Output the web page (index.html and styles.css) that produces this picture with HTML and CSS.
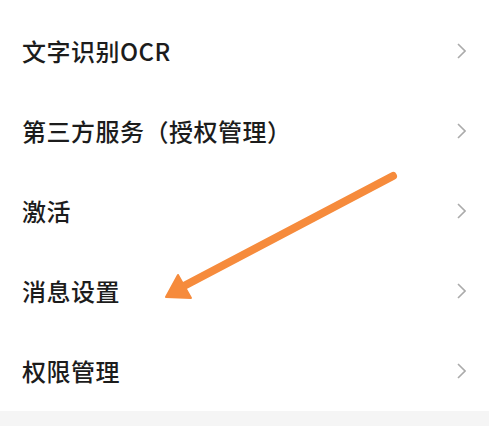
FILE: index.html
```html
<!DOCTYPE html>
<html lang="zh-CN">
<head>
<meta charset="utf-8">
<title>设置</title>
<link rel="stylesheet" href="styles.css">
</head>
<body>
<div class="page">
  <ul class="menu">
    <li class="row"><span class="label">文字识别OCR</span><svg class="chev" viewBox="0 0 9 16"><path d="M1 1 L8 8 L1 15"/></svg></li>
    <li class="row"><span class="label">第三方服务（授权管理）</span><svg class="chev" viewBox="0 0 9 16"><path d="M1 1 L8 8 L1 15"/></svg></li>
    <li class="row"><span class="label">激活</span><svg class="chev" viewBox="0 0 9 16"><path d="M1 1 L8 8 L1 15"/></svg></li>
    <li class="row"><span class="label">消息设置</span><svg class="chev" viewBox="0 0 9 16"><path d="M1 1 L8 8 L1 15"/></svg></li>
    <li class="row"><span class="label">权限管理</span><svg class="chev" viewBox="0 0 9 16"><path d="M1 1 L8 8 L1 15"/></svg></li>
  </ul>
  <div class="footer"></div>
  <svg class="arrow" viewBox="0 0 489 426" width="489" height="426">
    <line x1="393" y1="176" x2="182" y2="287" stroke="#f68b3c" stroke-width="8" stroke-linecap="round"/>
    <polygon points="166,297 178,275 191,298" fill="#f68b3c" stroke="#f68b3c" stroke-width="2" stroke-linejoin="round"/>
  </svg>
</div>
</body>
</html>
```
FILE: styles.css
```css
html, body {
  margin: 0;
  padding: 0;
  background: #ffffff;
}
.page {
  position: relative;
  width: 489px;
  height: 426px;
  display: flex;
  flex-direction: column;
  overflow: hidden;
  font-family: "Noto Sans CJK SC", "Noto Sans", sans-serif;
}
.menu {
  list-style: none;
  margin: 0;
  padding: 11px 0 0 0;
}
.row {
  height: 80px;
  display: flex;
  align-items: center;
  justify-content: space-between;
  padding: 0 23px 0 22px;
}
.label {
  font-size: 24px;
  font-weight: 500;
  color: #1c1c1c;
  line-height: 1;
  letter-spacing: 0.5px;
}
.chev {
  width: 9px;
  height: 16px;
  fill: none;
  stroke: #ababab;
  stroke-width: 1.6;
}
.footer {
  flex: 1;
  background: #f5f5f5;
}
.arrow {
  position: absolute;
  left: 0;
  top: 0;
  pointer-events: none;
}
```
